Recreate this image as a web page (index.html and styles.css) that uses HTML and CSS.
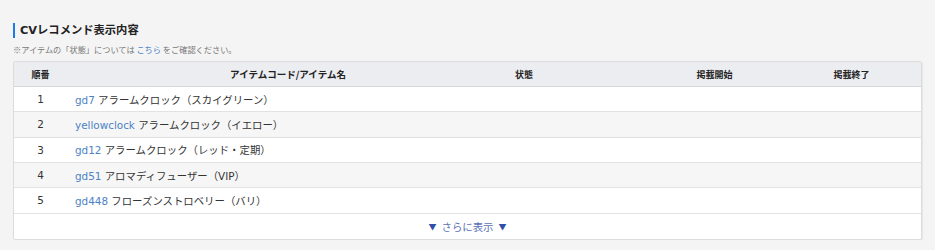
FILE: index.html
```html
<!DOCTYPE html>
<html lang="ja">
<head>
<meta charset="utf-8">
<link rel="stylesheet" href="styles.css">
</head>
<body>
<div class="page">
  <h2 class="title">CVレコメンド表示内容</h2>
  <p class="note">※アイテムの「状態」については <a class="link" href="#">こちら</a> をご確認ください。</p>
  <div class="table">
    <div class="row head">
      <div class="c num">順番</div>
      <div class="c item center">アイテムコード/アイテム名</div>
      <div class="c state">状態</div>
      <div class="c start">掲載開始</div>
      <div class="c end">掲載終了</div>
      <div class="c"></div>
    </div>
    <div class="row">
      <div class="c num">1</div>
      <div class="c item"><a class="link" href="#">gd7</a> アラームクロック（スカイグリーン）</div>
      <div class="c"></div><div class="c"></div><div class="c"></div><div class="c"></div>
    </div>
    <div class="row alt">
      <div class="c num">2</div>
      <div class="c item"><a class="link" href="#">yellowclock</a> アラームクロック（イエロー）</div>
      <div class="c"></div><div class="c"></div><div class="c"></div><div class="c"></div>
    </div>
    <div class="row">
      <div class="c num">3</div>
      <div class="c item"><a class="link" href="#">gd12</a> アラームクロック（レッド・定期）</div>
      <div class="c"></div><div class="c"></div><div class="c"></div><div class="c"></div>
    </div>
    <div class="row alt">
      <div class="c num">4</div>
      <div class="c item"><a class="link" href="#">gd51</a> アロマディフューザー（VIP）</div>
      <div class="c"></div><div class="c"></div><div class="c"></div><div class="c"></div>
    </div>
    <div class="row">
      <div class="c num">5</div>
      <div class="c item"><a class="link" href="#">gd448</a> フローズンストロベリー（バリ）</div>
      <div class="c"></div><div class="c"></div><div class="c"></div><div class="c"></div>
    </div>
    <div class="more">
      <span class="tri">▼</span><span class="more-text">さらに表示</span><span class="tri">▼</span>
    </div>
  </div>
</div>
</body>
</html>
```
FILE: styles.css
```css
html, body {
  margin: 0;
  padding: 0;
  background: #f4f4f4;
}
body {
  font-family: "DejaVu Sans", "Noto Sans CJK JP", sans-serif;
  color: #333;
}
.page {
  padding: 23px 13px 0 13px;
}
.title {
  margin: 0;
  font-size: 11.3px;
  font-weight: bold;
  line-height: 15px;
  color: #222;
  border-left: 2px solid #1e7be6;
  padding-left: 5px;
  font-family: "DejaVu Sans", "Noto Sans CJK JP", sans-serif;
}
.note {
  margin: 6px 0 0 0;
  font-size: 8.2px;
  line-height: 11px;
  color: #777;
  font-family: "Noto Sans CJK JP", sans-serif;
}
.link {
  color: #4d82c4;
  text-decoration: none;
}
.table {
  margin-top: 6px;
  background: #fff;
  border: 1px solid #dcdcdc;
  border-radius: 2px;
  box-shadow: 1px 1px 1px rgba(0,0,0,0.06);
}
.row {
  display: grid;
  grid-template-columns: 53px 442px 131px 149px 125px 1fr;
  height: 25.33px;
  box-sizing: border-box;
  border-bottom: 1px solid #e2e2e2;
  align-items: center;
  font-size: 10.4px;
  font-family: "DejaVu Sans", "Noto Sans CJK JP", sans-serif;
}
.row.alt {
  background: #f6f6f6;
}
.row.head {
  height: 25px;
  background: #ecedf0;
  border-bottom: 1px solid #d8d8d8;
  font-weight: bold;
  font-size: 9px;
  color: #222;
  font-family: "Noto Sans CJK JP", sans-serif;
}
.c {
  white-space: nowrap;
}
.num {
  text-align: center;
}
.item {
  padding-left: 8px;
}
.item.center {
  text-align: center;
  padding-left: 0;
  font-size: 9.5px;
}
.state {
  padding-left: 6px;
}
.start, .end {
  text-align: center;
}
.more {
  height: 25px;
  display: flex;
  justify-content: center;
  align-items: center;
  gap: 5px;
  font-size: 10.4px;
  font-family: "Noto Sans CJK JP", sans-serif;
}
.tri {
  color: #2f4fa8;
  font-size: 8px;
}
.more-text {
  color: #5a70b5;
}
```
